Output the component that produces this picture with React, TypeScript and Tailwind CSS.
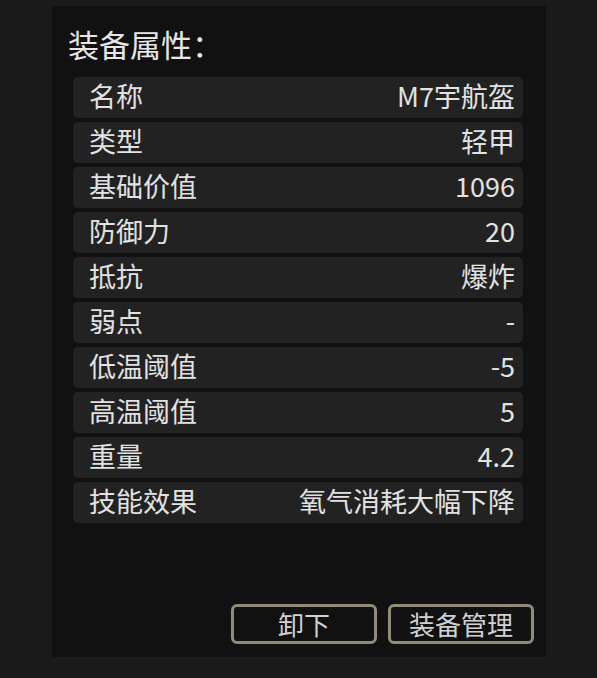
import React from 'react';

const attrs: [string, string][] = [
  ['名称', 'M7宇航盔'],
  ['类型', '轻甲'],
  ['基础价值', '1096'],
  ['防御力', '20'],
  ['抵抗', '爆炸'],
  ['弱点', '-'],
  ['低温阈值', '-5'],
  ['高温阈值', '5'],
  ['重量', '4.2'],
  ['技能效果', '氧气消耗大幅下降'],
];

const font = { fontFamily: '"Noto Sans CJK SC", "Noto Sans", sans-serif' };

export default function App() {
  return (
    <div className="w-full h-[678px] bg-[#1a1a1a] pl-[52px] pt-[6px]" style={font}>
      <div className="w-[494px] h-[651px] bg-[#111111] flex flex-col">
        {/* header */}
        <h2 className="pl-[16px] pt-[19px] text-[31px] leading-[38px] text-[#e6e6e6]">装备属性：</h2>

        <div className="mt-[14px] ml-[21px] w-[450px] flex flex-col gap-[4px]">
          {attrs.map(([label, value]) => (
            <div
              key={label}
              className="h-[41px] bg-[#222222] rounded-[5px] flex items-center justify-between pl-[16px] pr-[8px] pb-[4px] text-[27px] leading-[36px] text-[#e2e2e2]"
            >
              <span>{label}</span>
              <span>{value}</span>
            </div>
          ))}
        </div>

        <div className="mt-auto pb-[13px] pr-[12px] flex justify-end gap-[11px]">
          <button className="w-[146px] h-[40px] border-[3px] border-[#8f8a7a] rounded-[6px] bg-[#111111] text-[26px] leading-[32px] text-[#d0d0d0]">
            卸下
          </button>
          <button className="w-[146px] h-[40px] border-[3px] border-[#8f8a7a] rounded-[6px] bg-[#111111] text-[26px] leading-[32px] text-[#d0d0d0]">
            装备管理
          </button>
        </div>
      </div>
    </div>
  );
}
